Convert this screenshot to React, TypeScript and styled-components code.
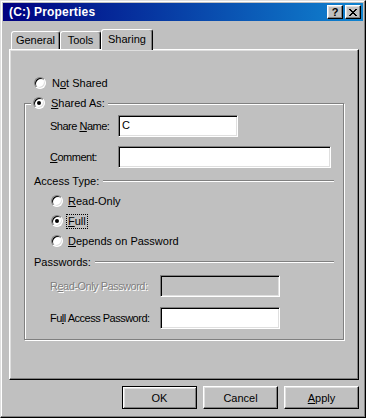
import * as React from "react";
import styled, { createGlobalStyle, css } from "styled-components";

const GlobalStyle = createGlobalStyle`
  html, body {
    margin: 0;
    padding: 0;
    background: #c0c0c0;
  }
  * {
    box-sizing: border-box;
  }
`;

const raised = css`
  border-style: solid;
  border-width: 1px;
  border-color: #fff #000 #000 #fff;
  box-shadow: inset -1px -1px 0 #808080, inset 1px 1px 0 #dfdfdf;
`;

const sunken = css`
  border-style: solid;
  border-width: 1px;
  border-color: #808080 #fff #fff #808080;
  box-shadow: inset 1px 1px 0 #000, inset -1px -1px 0 #dfdfdf;
`;

const Window = styled.div`
  width: 366px;
  height: 418px;
  background: #c0c0c0;
  border-style: solid;
  border-width: 1px;
  border-color: #dfdfdf #000 #000 #dfdfdf;
  box-shadow: inset -1px -1px 0 #808080, inset 1px 1px 0 #fff;
  font-family: "Liberation Sans", Arial, sans-serif;
  font-size: 11px;
  color: #000;
  display: flex;
  flex-direction: column;
  padding: 2px;
`;

const TitleBar = styled.div`
  height: 18px;
  display: flex;
  align-items: center;
  padding: 0 2px 0 6px;
  background: linear-gradient(to right, #000080, #1084d0);
  color: #fff;
`;

const TitleText = styled.div`
  flex: 1;
  font-weight: bold;
  font-size: 12px;
  letter-spacing: 0.2px;
`;

const TitleButtons = styled.div`
  display: flex;
  gap: 2px;
`;

const CaptionButton = styled.div`
  ${raised};
  width: 16px;
  height: 14px;
  background: #c0c0c0;
  color: #000;
  display: flex;
  align-items: center;
  justify-content: center;
  font-weight: bold;
  font-size: 11px;
  line-height: 1;
`;

const Body = styled.div`
  padding: 8px 4px 0 6px;
`;

const TabStrip = styled.div`
  height: 20px;
  display: flex;
  align-items: flex-end;
  padding-left: 2px;
`;

const Tab = styled.div<{ $active?: boolean; $width: number }>`
  position: relative;
  width: ${(p) => p.$width}px;
  height: ${(p) => (p.$active ? 21 : 18)}px;
  margin-bottom: ${(p) => (p.$active ? -1 : 0)}px;
  z-index: ${(p) => (p.$active ? 1 : 0)};
  background: #c0c0c0;
  border-style: solid;
  border-width: 1px 1px 0 1px;
  border-color: #fff #000 transparent #fff;
  border-radius: 3px 3px 0 0;
  box-shadow: inset -1px 0 0 #808080;
  display: flex;
  justify-content: center;
  padding-top: ${(p) => (p.$active ? 3 : 2)}px;
`;

const Panel = styled.div`
  width: 350px;
  height: 331px;
  border-style: solid;
  border-width: 1px;
  border-color: #fff #000 #000 #fff;
  box-shadow: inset -1px -1px 0 #808080, inset 1px 1px 0 #dfdfdf;
  padding: 25px 0 0 14px;
`;

const Key = styled.span`
  text-decoration: underline;
  text-underline-offset: 1px;
`;

const RadioRow = styled.div<{ $indent: number }>`
  height: 16px;
  display: flex;
  align-items: center;
  gap: 5px;
  margin-left: ${(p) => p.$indent}px;
`;

const RadioMark = styled.span<{ $checked?: boolean }>`
  position: relative;
  width: 12px;
  height: 12px;
  flex: none;
  border-radius: 50%;
  background: #fff;
  border-style: solid;
  border-width: 1px;
  border-color: #808080 #fff #fff #808080;
  box-shadow: inset 1px 1px 0 #000, inset -1px -1px 0 #dfdfdf;

  ${(p) =>
    p.$checked &&
    css`
      &::after {
        content: "";
        position: absolute;
        left: 3px;
        top: 3px;
        width: 4px;
        height: 4px;
        border-radius: 50%;
        background: #000;
      }
    `}
`;

const RadioText = styled.span<{ $focused?: boolean }>`
  line-height: 13px;
  padding: 0 1px;
  white-space: nowrap;
  ${(p) =>
    p.$focused &&
    css`
      outline: 1px dotted #000;
      outline-offset: 0;
    `}
`;

const GroupBox = styled.div`
  width: 320px;
  height: 237px;
  margin-top: 12px;
  border: 1px solid #808080;
  box-shadow: inset 1px 1px 0 #fff, 1px 1px 0 #fff;
`;

const GroupLegend = styled.div`
  width: fit-content;
  margin: -9px 0 0 6px;
  padding: 0 2px;
  background: #c0c0c0;
`;

const FieldRow = styled.div<{ $top: number }>`
  display: flex;
  align-items: center;
  margin: ${(p) => p.$top}px 0 0 25px;
`;

const FieldLabel = styled.label<{ $width: number; $disabled?: boolean }>`
  width: ${(p) => p.$width}px;
  flex: none;
  white-space: nowrap;
  letter-spacing: -0.5px;
  ${(p) =>
    p.$disabled &&
    css`
      color: #808080;
      text-shadow: 1px 1px 0 #fff;
    `}
`;

const TextBox = styled.div<{ $width: number; $disabled?: boolean }>`
  ${sunken};
  width: ${(p) => p.$width}px;
  height: 22px;
  background: ${(p) => (p.$disabled ? "#c0c0c0" : "#fff")};
  padding: 3px 0 0 3px;
  font-size: 11px;
`;

const SectionHeader = styled.div<{ $top: number }>`
  height: 14px;
  display: flex;
  align-items: center;
  gap: 4px;
  margin: ${(p) => p.$top}px 9px 0 9px;
`;

const SectionLine = styled.div`
  flex: 1;
  height: 2px;
  border-top: 1px solid #808080;
  border-bottom: 1px solid #fff;
  margin-top: -1px;
`;

const RadioList = styled.div`
  display: flex;
  flex-direction: column;
  gap: 4px;
  margin-top: 5px;
  ${RadioRow} {
    gap: 4px;
  }
`;

const Footer = styled.div`
  width: 350px;
  display: flex;
  justify-content: flex-end;
  gap: 6px;
  margin-top: 6px;
`;

const Button = styled.div<{ $default?: boolean }>`
  width: 75px;
  height: 23px;
  display: flex;
  align-items: center;
  justify-content: center;
  background: #c0c0c0;
  ${(p) =>
    p.$default
      ? css`
          border: 1px solid #000;
          box-shadow: inset 1px 1px 0 #fff, inset -1px -1px 0 #808080,
            inset 2px 2px 0 #dfdfdf;
        `
      : raised}
`;

function CloseGlyph() {
  return (
    <svg width="8" height="7" viewBox="0 0 8 7" shapeRendering="crispEdges">
      <path
        d="M0 0h2v1h-2zM6 0h2v1h-2zM1 1h2v1h-2zM5 1h2v1h-2zM2 2h4v1h-4zM3 3h2v1h-2zM2 4h4v1h-4zM1 5h2v1h-2zM5 5h2v1h-2zM0 6h2v1h-2zM6 6h2v1h-2z"
        fill="#000"
      />
    </svg>
  );
}

export default function App() {
  return (
    <>
      <GlobalStyle />
      <Window>
        <TitleBar>
          <TitleText>(C:) Properties</TitleText>
          <TitleButtons>
            <CaptionButton>?</CaptionButton>
            <CaptionButton>
              <CloseGlyph />
            </CaptionButton>
          </TitleButtons>
        </TitleBar>

        <Body>
          <TabStrip>
            <Tab $width={49}>General</Tab>
            <Tab $width={41}>Tools</Tab>
            <Tab $width={52} $active>
              Sharing
            </Tab>
          </TabStrip>

          <Panel>
            <RadioRow $indent={10}>
              <RadioMark />
              <RadioText>
                N<Key>o</Key>t Shared
              </RadioText>
            </RadioRow>

            <GroupBox>
              <GroupLegend>
                <RadioRow $indent={0}>
                  <RadioMark $checked />
                  <RadioText>
                    <Key>S</Key>hared As:
                  </RadioText>
                </RadioRow>
              </GroupLegend>

              <FieldRow $top={4}>
                <FieldLabel $width={68}>
                  Share <Key>N</Key>ame:
                </FieldLabel>
                <TextBox $width={120}>C</TextBox>
              </FieldRow>

              <FieldRow $top={9}>
                <FieldLabel $width={68}>
                  <Key>C</Key>omment:
                </FieldLabel>
                <TextBox $width={213} />
              </FieldRow>

              <SectionHeader $top={6}>
                <span>Access Type:</span>
                <SectionLine />
              </SectionHeader>

              <RadioList>
                <RadioRow $indent={26}>
                  <RadioMark />
                  <RadioText>
                    <Key>R</Key>ead-Only
                  </RadioText>
                </RadioRow>
                <RadioRow $indent={26}>
                  <RadioMark $checked />
                  <RadioText $focused>
                    <Key>F</Key>ull
                  </RadioText>
                </RadioRow>
                <RadioRow $indent={26}>
                  <RadioMark />
                  <RadioText>
                    <Key>D</Key>epends on Password
                  </RadioText>
                </RadioRow>
              </RadioList>

              <SectionHeader $top={6}>
                <span>Passwords:</span>
                <SectionLine />
              </SectionHeader>

              <FieldRow $top={6}>
                <FieldLabel $width={110} $disabled>
                  R<Key>e</Key>ad-Only Password:
                </FieldLabel>
                <TextBox $width={120} $disabled />
              </FieldRow>

              <FieldRow $top={10}>
                <FieldLabel $width={110}>
                  Fu<Key>l</Key>l Access Password:
                </FieldLabel>
                <TextBox $width={120} />
              </FieldRow>
            </GroupBox>
          </Panel>

          <Footer>
            <Button $default>OK</Button>
            <Button>Cancel</Button>
            <Button>
              <span>
                <Key>A</Key>pply
              </span>
            </Button>
          </Footer>
        </Body>
      </Window>
    </>
  );
}
